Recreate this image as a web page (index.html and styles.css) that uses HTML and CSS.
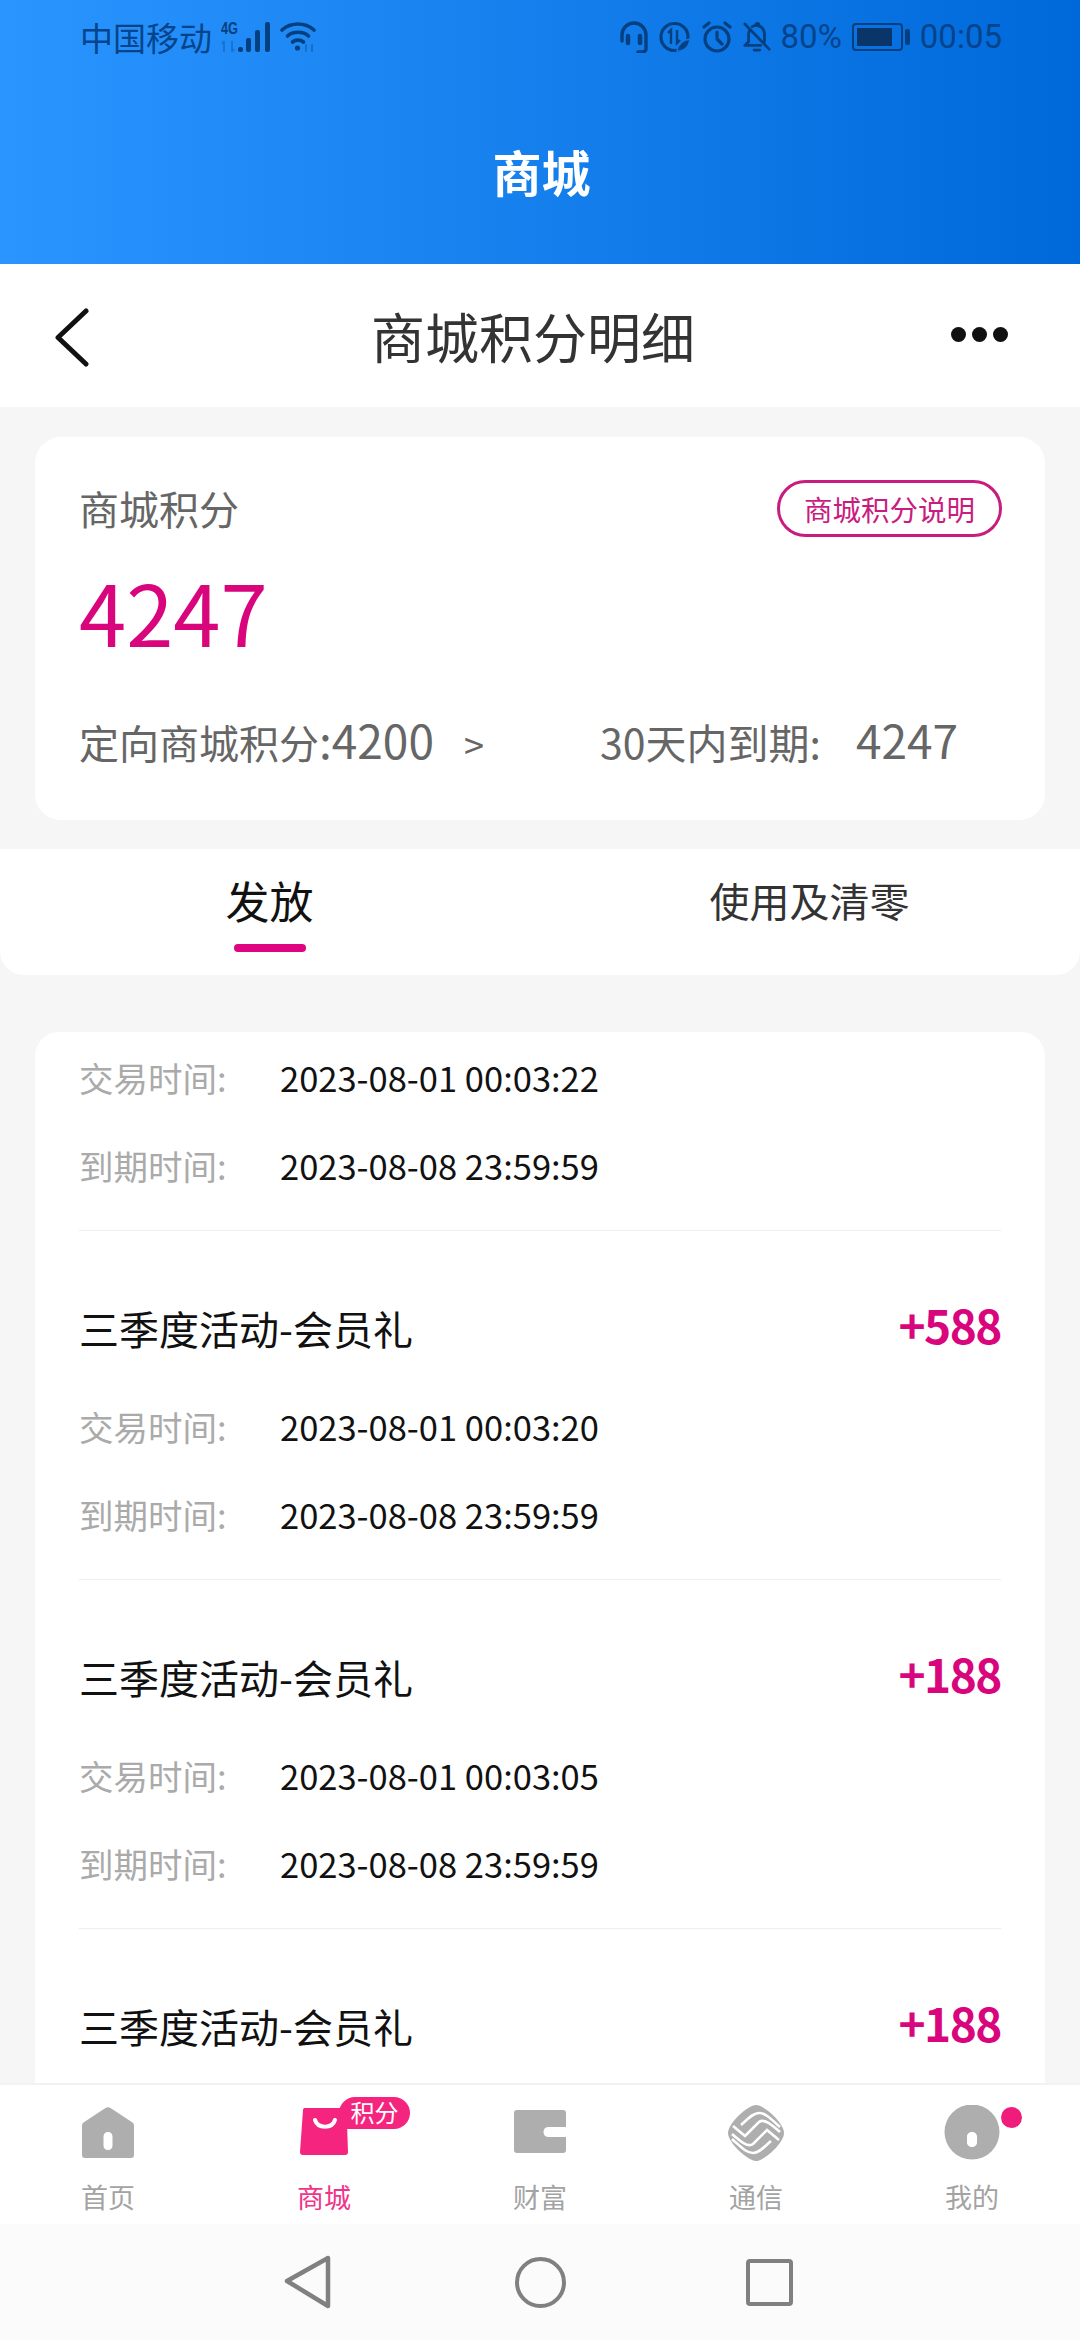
FILE: index.html
```html
<!DOCTYPE html>
<html lang="zh-CN">
<head>
    <meta charset="UTF-8">
    <meta name="viewport" content="width=device-width, initial-scale=1.0">
    <title>商城积分明细</title>
    <link rel="stylesheet" href="styles.css">
</head>
<body>
    <div class="screen">
        <div class="app-header">
            <div class="status-bar">
                <div class="status-left">
                    <span class="carrier">中国移动</span>
                    <svg class="signal" width="50" height="32" viewBox="0 0 50 32">
                        <text x="0" y="13" class="net-text" textLength="17" lengthAdjust="spacingAndGlyphs">4G</text>
                        <path d="M3 20v11M1 23l2-3M11 31V20M13 28l-2 3" fill="none" stroke="#04407f" stroke-width="2" opacity=".3"/>
                        <rect x="17" y="26" width="5" height="5" rx="2"/>
                        <rect x="25" y="17" width="5" height="14" rx="2"/>
                        <rect x="34" y="9" width="5" height="22" rx="2"/>
                        <rect x="44" y="1" width="5" height="30" rx="2"/>
                    </svg>
                    <svg class="wifi" width="38" height="32" viewBox="0 0 38 32" fill="none" stroke="#04407f" stroke-width="3.600" stroke-linecap="round">
                        <path d="M3 9C12 1 26 1 35 9"/>
                        <path d="M8.500 15C14 10 24 10 29.500 15"/>
                        <path d="M13.500 21C16.500 18.500 21.500 18.500 24.500 21"/>
                        <circle cx="18.500" cy="27" r="2.600" fill="#04407f" stroke="none"/>
                        <path d="M27 24v6M33 24v6" stroke-width="2" opacity=".35"/>
                    </svg>
                </div>
                <div class="status-right">
                    <svg width="30" height="32" viewBox="0 0 30 32" fill="none" stroke="#04407f" stroke-width="3.400" stroke-linecap="round">
                        <path d="M3 20V14a12 12 0 0 1 24 0v14c0 2-2 3-4 3h-4"/>
                        <path d="M9 15v7M21 15v7" stroke-width="4.500"/>
                    </svg>
                    <svg width="32" height="32" viewBox="0 0 32 32" fill="none" stroke="#04407f" stroke-width="3.200">
                        <circle cx="15.500" cy="16" r="13.500"/>
                        <path d="M9 12l3-3v14M18 9v13l3-3" stroke-width="2.400"/>
                        <path d="M18 30c1-7 6-11 13-12-1 7-5 12-13 12z" fill="#04407f" stroke="#0f77e6" stroke-width="1.500"/>
                    </svg>
                    <svg width="32" height="32" viewBox="0 0 32 32" fill="none" stroke="#04407f" stroke-width="3.200" stroke-linecap="round">
                        <circle cx="16" cy="18" r="12"/>
                        <path d="M16 11v7l5 5M3 6l5-4M29 6l-5-4"/>
                    </svg>
                    <svg width="28" height="32" viewBox="0 0 30 32" fill="none" stroke="#04407f" stroke-width="3" stroke-linecap="round" stroke-linejoin="round">
                        <path d="M7 9c-1 2-1 3-1 5v7l-4 4h17M10 5c4-3 12-1 13 7v9"/>
                        <path d="M12 30h6M14 3c0-2 3-2 3 0M2 2l26 27"/>
                    </svg>
                    <span class="battery-pct">80%</span>
                    <div class="battery"><div class="battery-level"></div></div>
                    <div class="battery-tip"></div>
                    <span class="clock">00:05</span>
                </div>
            </div>
            <div class="app-title">商城</div>
        </div>

        <div class="page-nav">
            <svg class="nav-back" width="36" height="60" viewBox="0 0 36 60" fill="none" stroke="#111" stroke-width="5" stroke-linecap="round" stroke-linejoin="round">
                <path d="M32 3L4 29.500L32 56"/>
            </svg>
            <div class="page-title">商城积分明细</div>
            <div class="nav-more"><span></span><span></span><span></span></div>
        </div>

        <div class="content">
            <div class="score-card">
                <div class="score-top">
                    <span class="score-label">商城积分</span>
                    <span class="score-btn">商城积分说明</span>
                </div>
                <div class="score-num">4247</div>
                <div class="score-bottom">
                    <span class="score-left">定向商城积分<span class="score-digits">:4200</span><span class="score-arrow">&gt;</span></span>
                    <span class="score-right">30天内到期:<span class="score-digits score-val">4247</span></span>
                </div>
            </div>

            <div class="tabs">
                <div class="tab active">发放</div>
                <div class="tab">使用及清零</div>
            </div>

            <div class="record-list">
                <div class="record record-first">
                    <div class="record-row"><span class="row-label">交易时间:</span><span>2023-08-01 00:03:22</span></div>
                    <div class="record-row"><span class="row-label">到期时间:</span><span>2023-08-08 23:59:59</span></div>
                </div>
                <div class="record">
                    <div class="record-head"><span class="record-name">三季度活动-会员礼</span><span class="record-points">+588</span></div>
                    <div class="record-row"><span class="row-label">交易时间:</span><span>2023-08-01 00:03:20</span></div>
                    <div class="record-row"><span class="row-label">到期时间:</span><span>2023-08-08 23:59:59</span></div>
                </div>
                <div class="record">
                    <div class="record-head"><span class="record-name">三季度活动-会员礼</span><span class="record-points">+188</span></div>
                    <div class="record-row"><span class="row-label">交易时间:</span><span>2023-08-01 00:03:05</span></div>
                    <div class="record-row"><span class="row-label">到期时间:</span><span>2023-08-08 23:59:59</span></div>
                </div>
                <div class="record record-last">
                    <div class="record-head"><span class="record-name">三季度活动-会员礼</span><span class="record-points">+188</span></div>
                </div>
            </div>
        </div>

        <div class="tabbar">
            <div class="tabbar-item">
                <svg width="56" height="56" viewBox="0 0 56 56" fill="#aeaeae">
                    <path fill-rule="evenodd" d="M25.500 3L3.500 17.500C2.500 18.500 2 19.500 2 21V50C2 52 3 53 5 53H51C53 53 54 52 54 50V21C54 19.500 53.500 18.500 52.500 17.500L30.500 3C29 2 27 2 25.500 3zM28 27c2.800 0 4.500 2 4.500 4.500v9c0 2.500-1.700 4.500-4.500 4.500s-4.500-2-4.500-4.500v-9c0-2.500 1.700-4.500 4.500-4.500z"/>
                </svg>
                <span>首页</span>
            </div>
            <div class="tabbar-item active">
                <div class="shop-icon">
                    <svg width="56" height="56" viewBox="0 0 56 56">
                        <path fill="#f5247f" d="M9 3h40c1 0 1.500 .5 1.500 1.500L52 47c0 2-1 3-3 3H7c-2 0-3-1-3-3L7 5c0-1.500 1-2 2-2z"/>
                        <path fill="none" stroke="#fff" stroke-width="4" stroke-linecap="round" d="M19 15c3 9 17 9 20 0"/>
                    </svg>
                    <span class="shop-badge">积分</span>
                </div>
                <span>商城</span>
            </div>
            <div class="tabbar-item">
                <svg width="56" height="56" viewBox="0 0 56 56" fill="#aeaeae">
                    <path d="M5 5h46c2 0 3 1 3 3v14H36c-6 0-6 10 0 10h18v13c0 2-1 3-3 3H5c-2 0-3-1-3-3V8c0-2 1-3 3-3z"/>
                </svg>
                <span>财富</span>
            </div>
            <div class="tabbar-item">
                <svg width="56" height="56" viewBox="0 0 56 56">
                    <path fill="#aeaeae" d="M28 0C36 0 56 18 56 28C56 38 36 56 28 56C20 56 0 38 0 28C0 18 20 0 28 0z"/>
                    <g fill="none" stroke="#fff" stroke-width="2.600">
                        <path d="M5 21L17 31L31 17C36 13 44 20 52 27"/>
                        <path d="M51 35L39 25L25 39C20 43 12 36 4 29"/>
                        <path d="M4 34C12 41 18 48 25 48C31 48 36 42 43 36"/>
                        <path d="M52 22C44 15 38 8 31 8C25 8 20 14 13 20"/>
                    </g>
                </svg>
                <span>通信</span>
            </div>
            <div class="tabbar-item">
                <div class="mine-icon">
                    <svg width="56" height="56" viewBox="0 0 56 56" fill="#aeaeae">
                        <path fill-rule="evenodd" d="M28 -.5a27.500 27.500 0 1 0 0 55 27.500 27.500 0 0 0 0-55zM28 27c2.800 0 5 2 5 4.500v6c0 2.500-2.200 4.500-5 4.500s-5-2-5-4.500v-6c0-2.500 2.200-4.500 5-4.500z"/>
                    </svg>
                    <span class="mine-dot"></span>
                </div>
                <span>我的</span>
            </div>
        </div>

        <div class="system-nav">
            <svg width="48" height="54" viewBox="0 0 48 54" fill="none" stroke="#808080" stroke-width="4.500" stroke-linejoin="round">
                <path d="M44 3v48L3 26z"/>
            </svg>
            <div class="sys-home"></div>
            <div class="sys-square"></div>
        </div>
    </div>
</body>
</html>
```
FILE: styles.css
```css
* {
    box-sizing: border-box;
}
body {
    margin: 0;
    font-family: "Noto Sans CJK SC", "Noto Sans", sans-serif;
    background: #f6f6f6;
}
.screen {
    position: relative;
    width: 1080px;
    height: 2340px;
    overflow: hidden;
    display: flex;
    flex-direction: column;
    background: #f6f6f6;
}

/* header */
.app-header {
    height: 264px;
    flex: none;
    background: linear-gradient(90deg, #2a95ff, #0069da);
}
.status-bar {
    height: 74px;
    padding: 19px 0 0 80px;
    display: flex;
    justify-content: space-between;
    color: #05438a;
}
.status-left, .status-right {
    display: flex;
    align-items: center;
    height: 36px;
}
.carrier {
    font-size: 33px;
    line-height: 36px;
}
.signal {
    margin-left: 9px;
    fill: #04407f;
}
.net-text {
    font-family: "Liberation Sans", sans-serif;
    font-size: 16px;
    font-weight: bold;
}
.wifi {
    margin-left: 8px;
}
.status-right {
    padding-right: 78px;
    gap: 10px;
}
.battery-pct, .clock {
    font-family: Roboto, sans-serif;
    font-size: 33px;
    line-height: 36px;
}
.battery {
    width: 51px;
    height: 28px;
    padding: 3px;
    border: 2px solid #04407f;
    border-radius: 4px;
}
.battery-level {
    width: 35px;
    height: 100%;
    background: #0a3568;
}
.battery-tip {
    width: 5px;
    height: 16px;
    margin-left: -8px;
    background: #04407f;
    border-radius: 2px;
}
.app-title {
    margin-top: 54px;
    height: 86px;
    line-height: 86px;
    text-align: center;
    color: #fff;
    font-size: 49px;
    font-weight: 700;
    padding-left: 3px;
}

/* page nav */
.page-nav {
    height: 143px;
    flex: none;
    background: #fff;
    display: flex;
    align-items: center;
    justify-content: center;
    position: relative;
    padding-bottom: 1px;
}
.nav-back {
    position: absolute;
    left: 54px;
    top: 44px;
}
.page-title {
    font-size: 54px;
    color: #333;
    margin-left: -14px;
}
.nav-more {
    position: absolute;
    right: 72px;
    top: 63px;
    display: flex;
    gap: 6px;
}
.nav-more span {
    width: 15px;
    height: 15px;
    border-radius: 50%;
    background: #111;
}

/* content */
.content {
    flex: 1;
    min-height: 0;
    overflow: hidden;
    padding-top: 30px;
}
.score-card {
    margin: 0 35px;
    height: 383px;
    background: #fff;
    border-radius: 26px;
    padding: 43px 43px 0 44px;
}
.score-top {
    display: flex;
    justify-content: space-between;
    align-items: center;
    height: 57px;
}
.score-label {
    font-size: 40px;
    color: #666;
    line-height: 56px;
    margin-top: -2px;
}
.score-btn {
    height: 57px;
    line-height: 51px;
    padding: 0 24px;
    border: 3px solid #c91c7f;
    border-radius: 29px;
    color: #c91c7f;
    font-size: 28.500px;
}
.score-num {
    margin-top: 23px;
    font-size: 85px;
    line-height: 100px;
    color: #d9057d;
}
.score-bottom {
    margin-top: 51px;
    display: flex;
    font-size: 40px;
    line-height: 56px;
    color: #666;
}
.score-left {
    width: 521px;
}
.score-digits {
    font-size: 46px;
}
.score-arrow {
    margin-left: 30px;
    font-size: 36px;
}
.score-right {
    font-size: 41px;
}
.score-val {
    margin-left: 35px;
}

.tabs {
    margin-top: 29px;
    height: 126px;
    background: #fff;
    border-radius: 0 0 24px 24px;
    display: flex;
}
.tab {
    flex: 1;
    text-align: center;
    font-size: 40px;
    line-height: 102px;
    color: #333;
    position: relative;
    padding-right: 1px;
}
.tab.active {
    color: #111;
    font-size: 44px;
}
.tab.active::after {
    content: "";
    position: absolute;
    left: 234px;
    top: 95px;
    width: 72px;
    height: 8px;
    border-radius: 4px;
    background: #df0480;
}

/* records */
.record-list {
    margin: 57px 35px 0;
    background: #fff;
    border-radius: 24px 24px 0 0;
    padding: 0 44px;
}
.record {
    border-bottom: 1px solid #eee;
    padding-top: 67px;
    height: 349px;
}
.record-first {
    padding-top: 1px;
    height: 199px;
}
.record-last {
    border-bottom: none;
}
.record-head {
    display: flex;
    justify-content: space-between;
    align-items: center;
    height: 60px;
    margin-bottom: 24px;
}
.record-name {
    font-size: 40px;
    color: #111;
}
.record-points {
    font-size: 46px;
    font-weight: 600;
    color: #d9057d;
    letter-spacing: -1.500px;
    margin-bottom: 8px;
}
.record-row {
    display: flex;
    height: 88px;
    align-items: center;
    font-size: 34.500px;
    color: #111;
}
.row-label {
    width: 201px;
    color: #aaa;
}

/* bottom bar */
.tabbar {
    height: 141px;
    background: #fff;
    border-top: 2px solid #f2f2f2;
    display: flex;
    position: absolute;
    left: 0;
    right: 0;
    bottom: 116px;
}
.tabbar-item {
    width: 216.500px;
    display: flex;
    flex-direction: column;
    align-items: center;
    padding-top: 20px;
    font-size: 27px;
    line-height: 40px;
    color: #a3a3a3;
    gap: 16px;
}
.tabbar-item.active {
    color: #f0348a;
}
.shop-icon, .mine-icon {
    position: relative;
    width: 56px;
    height: 56px;
}
.shop-badge {
    position: absolute;
    left: 43px;
    top: -8px;
    width: 71px;
    height: 32px;
    background: #f5247f;
    border-radius: 16px 16px 16px 4px;
    color: #fff;
    font-size: 24px;
    line-height: 30px;
    text-align: center;
}
.mine-dot {
    position: absolute;
    left: 57px;
    top: 2px;
    width: 21px;
    height: 21px;
    border-radius: 50%;
    background: #f01c7c;
}
.system-nav {
    position: absolute;
    left: 0;
    right: 0;
    bottom: 0;
    height: 116px;
    background: #fbfbfb;
    display: flex;
    align-items: center;
    padding-left: 284px;
}
.sys-home {
    width: 51px;
    height: 51px;
    margin-left: 183px;
    border: 4.500px solid #808080;
    border-radius: 50%;
}
.sys-square {
    width: 47px;
    height: 47px;
    margin-left: 180px;
    border: 4.500px solid #808080;
    border-radius: 4px;
}
```
